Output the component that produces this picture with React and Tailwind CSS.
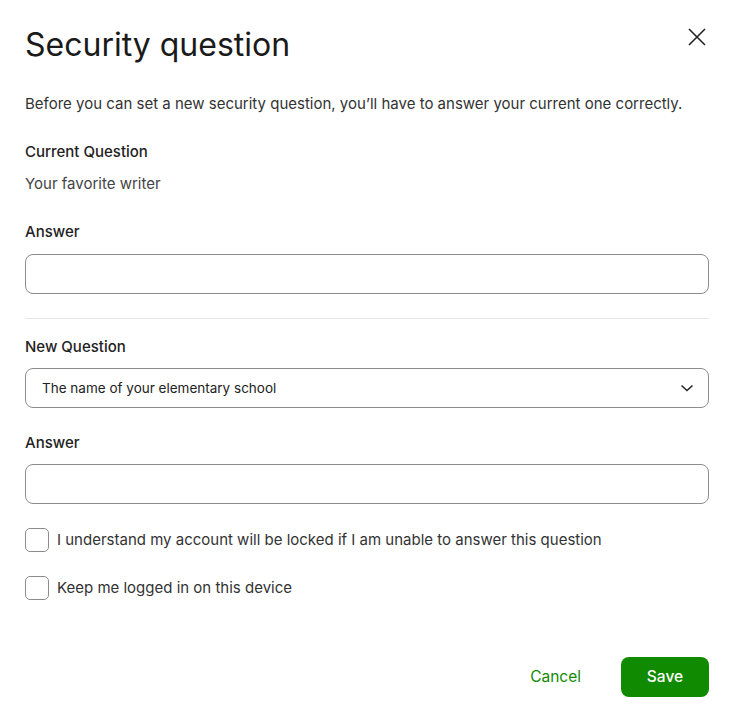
export default function App() {
  return (
    <div className="w-[734px] h-[718px] bg-white text-[#1a1a1a] px-[25px] pt-[25px]" style={{ fontFamily: "Inter, 'Noto Sans', sans-serif" }}>
      <div className="flex items-start justify-between">
        <h1 className="text-[32px] leading-10 font-normal">Security question</h1>
        <button className="mt-0 w-[24px] h-[24px] flex items-center justify-center text-[#222]">
          <svg width="20" height="20" viewBox="0 0 20 20" fill="none" stroke="currentColor" strokeWidth="1.6">
            <path d="M2 2 L18 18 M18 2 L2 18" />
          </svg>
        </button>
      </div>
      <p className="mt-[29px] text-[15px] leading-5 text-[#333]">Before you can set a new security question, you’ll have to answer your current one correctly.</p>
      <div className="mt-[28px] text-[15px] leading-5 font-medium text-[#222]">Current Question</div>
      <div className="mt-[12px] text-[15px] leading-5 text-[#444]">Your favorite writer</div>
      <div className="mt-[28px] text-[15px] leading-5 font-medium text-[#222]">Answer</div>
      <input className="mt-[12px] block w-full h-[40px] rounded-lg border border-[#8c8c8c] px-4 text-sm outline-none" />
      <div className="mt-[24px] h-px bg-[#e6e6e6]"></div>
      <div className="mt-[18px] text-[15px] leading-5 font-medium text-[#222]">New Question</div>
      <div className="mt-[11px] h-[40px] rounded-lg border border-[#8c8c8c] flex items-center justify-between pl-[16px] pr-[13px]">
        <span className="text-[13.5px] text-[#222]">The name of your elementary school</span>
        <svg width="16" height="16" viewBox="0 0 16 16" fill="none" stroke="#222" strokeWidth="1.5">
          <path d="M2.5 5.5 L8 10.5 L13.5 5.5" />
        </svg>
      </div>
      <div className="mt-[25px] text-[15px] leading-5 font-medium text-[#222]">Answer</div>
      <input className="mt-[11px] block w-full h-[40px] rounded-lg border border-[#8c8c8c] px-4 text-sm outline-none" />
      <label className="mt-[24px] flex items-center gap-[8px] h-[24px]">
        <span className="w-[24px] h-[24px] rounded-[5px] border border-[#8c8c8c] shrink-0"></span>
        <span className="text-[15px] text-[#333]">I understand my account will be locked if I am unable to answer this question</span>
      </label>
      <label className="mt-[24px] flex items-center gap-[8px] h-[24px]">
        <span className="w-[24px] h-[24px] rounded-[5px] border border-[#8c8c8c] shrink-0"></span>
        <span className="text-[15px] text-[#333]">Keep me logged in on this device</span>
      </label>
      <div className="mt-[57px] flex justify-end items-center">
        <button className="text-[15.5px] text-[#108a00] mr-[40px]">Cancel</button>
        <button className="w-[88px] h-[40px] rounded-lg bg-[#108a00] text-white text-[15.5px] font-medium">Save</button>
      </div>
    </div>
  );
}
